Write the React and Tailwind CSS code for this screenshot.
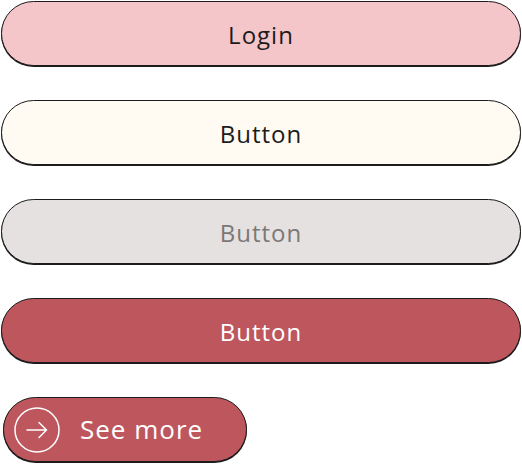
import React from 'react';

const base = "h-[65px] w-full rounded-full border-[1.5px] border-[#1c1c1c] shadow-[0_1px_0_#1c1c1c] flex items-center justify-center text-[24px] tracking-[1px] pt-[2px]";

function ArrowCircle(){
  return (
    <svg width="46" height="46" viewBox="0 0 46 46" fill="none">
      <circle cx="23" cy="23" r="22" stroke="white" strokeWidth="1.5" />
      <path d="M13 23h19M25 15.5l7.5 7.5-7.5 7.5" stroke="white" strokeWidth="1.5" strokeLinecap="round" strokeLinejoin="round" />
    </svg>
  );
}

export default function App(){
  return (
    <div className="w-[522px] h-[464px] bg-white px-px pt-px flex flex-col gap-[34px]" style={{fontFamily: '"Open Sans", sans-serif'}}>
      <button className={base + " bg-[#f4c6c9] text-[#1c1c1c]"}>Login</button>
      <button className={base + " bg-[#fffaf2] text-[#1c1c1c]"}>Button</button>
      <button className={base + " bg-[#e5e1e0] text-[#7b7877]"}>Button</button>
      <button className={base + " bg-[#be565e] text-white"}>Button</button>
      <button className="ml-0.5 h-[65px] w-[244px] rounded-full border-[1.5px] border-[#1c1c1c] shadow-[0_1px_0_#1c1c1c] bg-[#be565e] text-white flex items-center pl-[10px] gap-[20px] text-[26px] tracking-[1px]">
        <ArrowCircle />
        <span>See more</span>
      </button>
    </div>
  );
}
